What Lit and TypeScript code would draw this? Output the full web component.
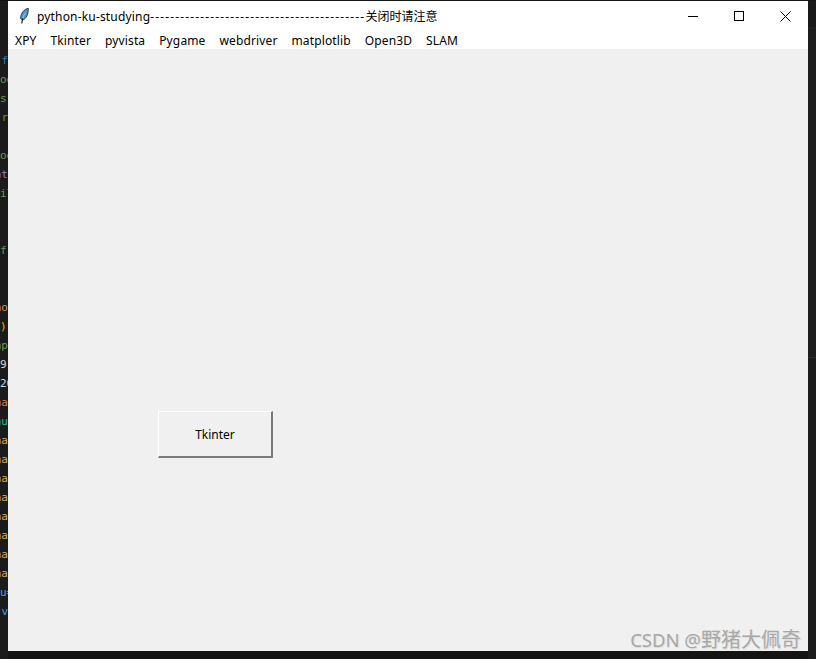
import { LitElement, html, css } from "lit";
import { customElement } from "lit/decorators.js";
import { classMap } from "lit/directives/class-map.js";

type Row = [string, string, boolean?];

const codeRows: Row[] = [
  ["", ""], ["", ""],
  ["f", "#2f7f9f"], ["oo", "#6a9955", true], ["s", "#6a9955", true], ["r", "#6f8f3f"], ["", ""],
  ["oo", "#6a9955", true], ["nt", "#8f7fd8"], ["il", "#6a9955", true], ["", ""], ["", ""],
  ["f:", "#6a9955", true], ["", ""], ["", ""],
  ["no", "#ce9178"], [")", "#e5b90b", true], ["ap", "#6a9955"], ["9.", "#d4d4d4", true], ["20", "#d4d4d4", true],
  ["na", "#ce7f5c"], ["nu", "#2fb5a0"], ["na", "#c8b060"], ["na", "#c8b060"], ["na", "#c8b060"],
  ["na", "#c8b060"], ["na", "#c8b060"], ["na", "#c8b060"], ["na", "#c8b060"], ["na", "#c8b060"],
  ["u=", "#4a9fe0", true], ["v", "#4a9fe0"],
];

const menus = ["XPY", "Tkinter", "pyvista", "Pygame", "webdriver", "matplotlib", "Open3D", "SLAM"];

@customElement("app-root")
export class AppRoot extends LitElement {
  static styles = css`
    :host {
      display: block;
      width: 816px;
      height: 659px;
      overflow: hidden;
      background: #141414;
      font-family: "Noto Sans", "Noto Sans CJK SC", sans-serif;
      font-size: 12px;
      color: #000;
    }
    .desk {
      display: flex;
      height: 100%;
      padding-top: 1px;
      box-sizing: border-box;
    }
    .strip {
      width: 8px;
      flex: none;
      overflow: hidden;
      font-family: "DejaVu Sans Mono", monospace;
      font-size: 11px;
      line-height: 19px;
      padding-top: 12px;
      box-sizing: border-box;
      height: 658px;
      background: #1b1b1b;
    }
    .code {
      height: 19px;
      display: flex;
      justify-content: flex-end;
      white-space: nowrap;
    }
    .code.left {
      justify-content: flex-start;
    }
    .window {
      width: 800px;
      height: 650px;
      flex: none;
      display: flex;
      flex-direction: column;
      background: #f0f0f0;
    }
    .title {
      height: 30px;
      flex: none;
      background: #fff;
      display: flex;
      align-items: center;
      padding-left: 10px;
    }
    .feather {
      width: 13px;
      height: 16px;
      flex: none;
    }
    .title-text {
      margin-left: 6px;
      flex: 1;
      white-space: nowrap;
      color: #000;
    }
    .latin {
      letter-spacing: 0.17px;
    }
    .dashes {
      letter-spacing: 1.14px;
    }
    .ctrl {
      width: 46px;
      height: 30px;
      display: flex;
      align-items: center;
      justify-content: center;
      flex: none;
    }
    .menu {
      height: 18px;
      box-sizing: border-box;
      padding: 2px 0 0 7px;
      flex: none;
      background: #fff;
      display: flex;
      align-items: center;
      gap: 14px;
      line-height: 16px;
      letter-spacing: 0.13px;
    }
    .body {
      flex: 1;
      padding: 362px 0 0 150px;
      position: relative;
    }
    .btn {
      width: 115px;
      height: 47px;
      box-sizing: border-box;
      background: #f0f0f0;
      border: none;
      border-top: 1px solid #fff;
      border-left: 1px solid #fff;
      border-right: 2px solid #7a7a7a;
      border-bottom: 2px solid #7a7a7a;
      font: inherit;
      color: #000;
      padding: 0;
    }
    .mark {
      position: absolute;
      right: 7px;
      bottom: -1px;
      font-size: 18.5px;
      line-height: 24px;
      color: #a8a8a8;
      text-shadow: 1px 1px 1px #dcdcdc;
      white-space: nowrap;
    }
    .mark-cjk {
      font-size: 20px;
    }
    .edge {
      width: 8px;
      flex: none;
      display: flex;
      flex-direction: column;
      height: 658px;
      background: #141414;
    }
    .edge-top {
      height: 26px;
      flex: none;
      background: #191919;
    }
    .edge-mid {
      height: 330px;
      flex: none;
      background: #1e1e1e;
    }
    .edge-line {
      height: 1px;
      flex: none;
      background: #2b2b2b;
    }
    .edge-low {
      flex: 1;
      background: #1c1c1c;
    }
  `;

  render() {
    return html`
      <div class="desk">
        <div class="strip">
          ${codeRows.map(
            ([t, c, left]) =>
              html`<div class=${classMap({ code: true, left: !!left })} style="color:${c}">${t}</div>`
          )}
        </div>
        <div class="window">
          <div class="title">
            <svg class="feather" viewBox="0 0 13 16">
              <path d="M10.3 .3C6.5 1 2.6 5 2.6 10.5L4.5 12C8 11 10.5 6.5 10.3 .3Z" fill="#4f8fd8" stroke="#1c2c40" stroke-width=".9"/>
              <path d="M7.5 4.5L6 7L5 10" fill="none" stroke="#bcd6f2" stroke-width=".7"/>
              <path d="M3.8 15.5L4.6 10.5" fill="none" stroke="#0c0c0c" stroke-width="1.1"/>
            </svg>
            <span class="title-text"><span class="latin">python-ku-studying</span><span class="dashes">-------------------------------------------</span>关闭时请注意</span>
            <span class="ctrl"><svg width="10" height="10" viewBox="0 0 10 10"><path d="M0 5.5H10" stroke="#000"/></svg></span>
            <span class="ctrl"><svg width="10" height="10" viewBox="0 0 10 10"><rect x=".5" y=".5" width="9" height="9" fill="none" stroke="#000"/></svg></span>
            <span class="ctrl"><svg width="11" height="11" viewBox="0 0 11 11"><path d="M.5 .5L10.5 10.5M10.5 .5L.5 10.5" stroke="#000"/></svg></span>
          </div>
          <div class="menu">${menus.map((m) => html`<span>${m}</span>`)}</div>
          <div class="body">
            <button class="btn">Tkinter</button>
            <div class="mark">CSDN @<span class="mark-cjk">野猪大佩奇</span></div>
          </div>
        </div>
        <div class="edge">
          <div class="edge-top"></div>
          <div class="edge-mid"></div>
          <div class="edge-line"></div>
          <div class="edge-low"></div>
        </div>
      </div>
    `;
  }
}
